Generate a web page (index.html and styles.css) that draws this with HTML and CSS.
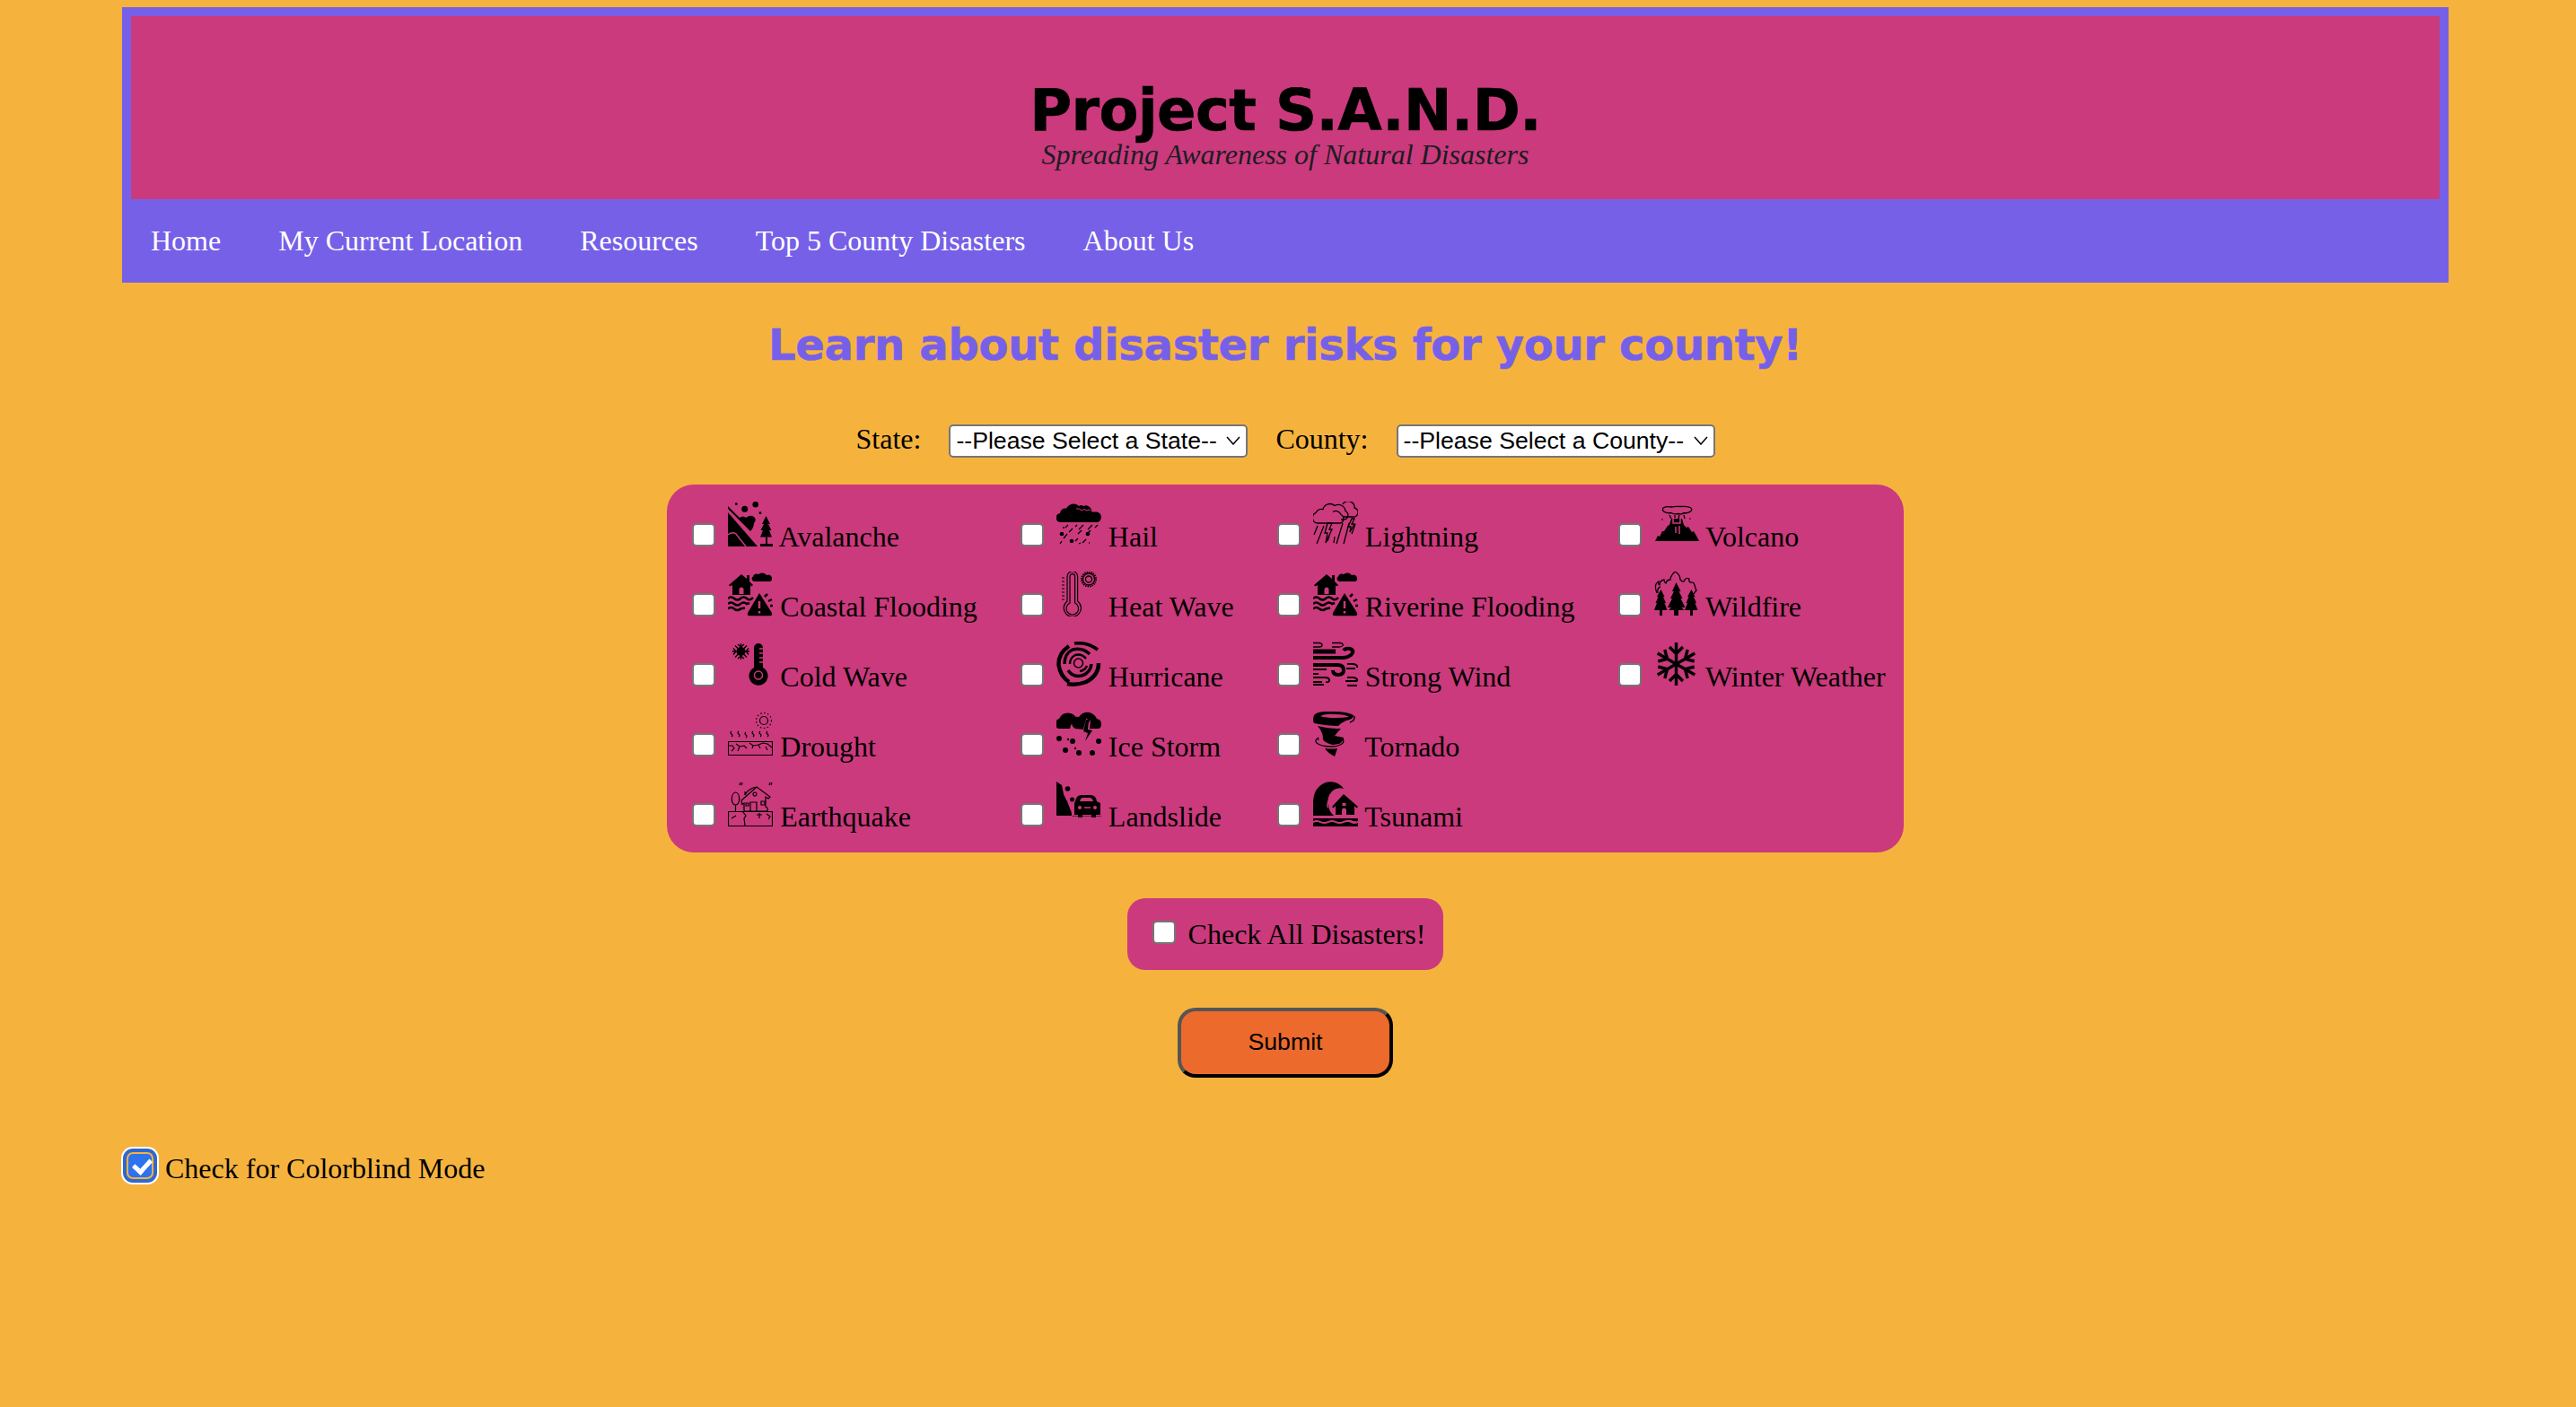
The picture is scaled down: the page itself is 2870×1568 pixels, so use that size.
FILE: index.html
```html
<!DOCTYPE html>
<html lang="en">
<head>
<meta charset="utf-8">
<title>Project S.A.N.D.</title>
<link rel="stylesheet" href="styles.css">
</head>
<body>
<svg class="defs" width="0" height="0" aria-hidden="true">
  <defs>
    <g id="i-flood">
      <path d="M1 15 15 3l6 5V4h3v7l4 4-1.500 1.500L25 15v11H5V15l-2.500 1.500z"/>
      <path class="cut-fill" d="M12.500 25v-5a2.500 2.500 0 0 1 5 0v5z"/>
      <path class="k" d="M0 30q3.500-3 7 0t7 0 7 0 7-1M0 36q3.500-3 7 0t7 0 7 0l3-1M0 41.500q3.500-3 7 0t7 0l5-1"/>
      <path d="M29 11a3 3 0 0 1-1-5.500 4 4 0 0 1 6-2.500 6 6 0 0 1 9 1 4 4 0 0 1 6 3.500 3 3 0 0 1-2 3.500z"/>
      <path d="M35 24 49 46q1 3-2 3.300H24q-3-.3-2-3.300z"/>
      <path class="cut" d="M35 33v8M35 44v2.500"/>
      <path class="k" d="m41 28 3-3M45 33l4-2M47 38h3"/>
    </g>
    <path id="i-arm" d="M24.500 25V1M17 6l7.500 7.500L32 6"/>
  </defs>
</svg>

<header class="site-header">
  <div class="banner">
    <div class="title">Project S.A.N.D.</div>
    <div class="subtitle">Spreading Awareness of Natural Disasters</div>
  </div>
  <nav class="nav">
    <a>Home</a>
    <a>My Current Location</a>
    <a>Resources</a>
    <a>Top 5 County Disasters</a>
    <a>About Us</a>
  </nav>
</header>

<main class="main">
  <h1 class="heading">Learn about disaster risks for your county!</h1>

  <form class="selects">
    <label for="state">State:</label>
    <span class="select-wrap">
      <select id="state" class="select"><option>--Please Select a State--</option></select>
      <svg class="chevron" viewBox="0 0 16 10"><path d="M1 1l7 8 7-8"/></svg>
    </span>
    <label for="county">County:</label>
    <span class="select-wrap">
      <select id="county" class="select"><option>--Please Select a County--</option></select>
      <svg class="chevron" viewBox="0 0 16 10"><path d="M1 1l7 8 7-8"/></svg>
    </span>
  </form>

  <div class="panel">
    <!-- row 1 -->
    <label class="item"><input type="checkbox" class="box"><svg class="icon" viewBox="0 0 50 50">
      <circle cx="30.700" cy="3.300" r="3.300"/><circle cx="18.700" cy="8.300" r="3.500"/><circle cx="9.300" cy="2.700" r="1.400"/><circle cx="36" cy="12.700" r="1.400"/>
      <path d="M0 5 13 18q4-3 7 0 5-4 9-1 3.500 3 0 7-.5 6-4 9L0 8z"/>
      <path d="M0 12 33 50H0z"/>
      <path class="cut" stroke-width="1.500" d="M0 37q5-4 9-1l11 14"/>
      <path d="M42.500 16 47 25h-2l3.500 7H46l3 7.500h-5V47h6v3H36v-3h6v-7.500h-6l3-7.500h-2.500L40 25h-2z"/>
    </svg> Avalanche</label>

    <label class="item"><input type="checkbox" class="box"><svg class="icon" viewBox="0 0 50 50">
      <path d="M5 23a5 5 0 0 1-1-10q1-6 7-5.500 3-5 9-5 3 0 5 2.500 3-2 5 0 4-2 7 1 3 3.500 2 5.500h6a6 6 0 0 1 1 11.500z"/>
      <path class="cut-thin" d="M22 8q4-1 6 2 3-3 6 0 2-2 4 0"/>
      <path class="k" stroke-width="1.300" d="m13 26-3 3M23 26l-2 2M30 26l-5 5M40 26l-5 5M46 26l-3 3M18 30l-4 4M28 32l-4 4M38 32l-5 5M12 36l-4 5M24 41l-3 3M33 42l-4 4M6 44l-2 3M27 46l-2 1M36 46h1"/>
      <circle cx="6" cy="36" r="2.300"/><circle cx="35" cy="36" r="2.300"/><circle cx="17" cy="44" r="2.300"/><circle cx="8" cy="29" r="1"/>
    </svg> Hail</label>

    <label class="item"><input type="checkbox" class="box"><svg class="icon" viewBox="0 0 50 50">
      <g class="thin">
        <path d="M31 20h3a5 5 0 0 0 2-9.500 8 8 0 0 0-12-6 8 8 0 0 0-13 4 7 7 0 0 0-8 4A6 6 0 0 0 5 24h24a5 5 0 0 0 2-9.500 6 6 0 0 0-9-3"/>
        <path d="M34 17h10a5 5 0 0 0 2-10 7 7 0 0 0-13-4"/>
        <path d="M5 27 1 37M12 27 4 47M18 38l-2 6M24 39l-1 7M33 24l-7 23M40 24l-6 23M47 25l-4 11"/>
        <path d="M21 24h-5l-3 11h3l-2 11 7-15h-3z"/>
        <path d="M43 19h3l-3 6h3l-5 9 1-6h-3z"/>
      </g>
    </svg> Lightning</label>

    <label class="item"><input type="checkbox" class="box"><svg class="icon" viewBox="0 0 50 50">
      <g class="thin">
        <path d="M10 7q4-2 9-1 5-1 10-.5 7-.5 11 1 3 2 1 4-3 3-8 2-2 2-6 1-5 1-8-1-6 1-9-2-1-3 0-3.500z"/>
        <path d="M17 15l2 4M23 15v3M28 15l-1 4M33 15l1 4"/>
      </g>
      <path d="M19 19h12l2 7 3 3 2-1 4 6 2-1 4 7 2 4H1l3-6 2 1 3-6h2l4-6 2-1z"/>
      <path class="cut" stroke-width="1.500" d="M21 19v5h8v-5M24 28v7M28 27v9"/>
      <circle cx="9" cy="20" r=".8"/><circle cx="40" cy="19" r=".8"/>
    </svg> Volcano</label>

    <!-- row 2 -->
    <label class="item"><input type="checkbox" class="box"><svg class="icon" viewBox="0 0 50 50"><use href="#i-flood"/></svg> Coastal Flooding</label>

    <label class="item"><input type="checkbox" class="box"><svg class="icon" viewBox="0 0 50 50">
      <g class="thin">
        <path stroke-width="1.200" d="M12 33V5.500a5.800 5.800 0 0 1 11.600 0V33a9.600 9.600 0 1 1-11.600 0z"/>
        <path stroke-width="1.200" d="M15 35V5.500a2.800 2.800 0 0 1 5.600 0V35a6.800 6.800 0 1 1-5.600 0z"/>
        <path stroke-width="1.200" d="M6 7h3M6 11h3M6 15h3M6 19h3M6 23h3M6 27h3M6 31h3"/>
        <circle cx="36" cy="8.500" r="6.500"/>
        <circle cx="36" cy="8.500" r="3.500"/>
        <path stroke-dasharray="1.500 1" stroke-width="2" d="M44 8.500a8 8 0 1 1-16 0 8 8 0 1 1 16 0z"/>
      </g>
    </svg> Heat Wave</label>

    <label class="item"><input type="checkbox" class="box"><svg class="icon" viewBox="0 0 50 50"><use href="#i-flood"/></svg> Riverine Flooding</label>

    <label class="item"><input type="checkbox" class="box"><svg class="icon" viewBox="0 0 50 50">
      <g class="thin">
        <path d="M3 24Q-1 14 5 11q-1 3 1 4 0-5 5-6 0 3 2 4 1-4 5-4 0-4 5-9 6 3 6 9 3 3 4 2 2-5 6-3-1 2 1 4 4-1 5 3t2 6q-2 2-3 4"/>
        <path d="M4 24q-1-6 3-7"/>
      </g>
      <path d="M24.500 12l5 10h-2l4 8h-2l5 10h-4l3 3H16l3-3h-4l5-10h-2l4-8h-2zM22 43h5v6h-5z"/>
      <path d="M7.500 20l4 8H10l3 7h-1.500l3 8H0l3-8H1.500l3-7H3zM6 43h3v6H6z"/>
      <path d="M41.500 20l4 8H44l3 7h-1.500l3 8H34l3-8h-1.500l3-7H37zM40 43h3v6h-3z"/>
    </svg> Wildfire</label>

    <!-- row 3 -->
    <label class="item"><input type="checkbox" class="box"><svg class="icon" viewBox="0 0 50 50">
      <circle cx="14.500" cy="11" r="5"/>
      <path class="k" stroke-width="1.300" d="M14.500 2v18M5 11h19M8 4.500l13 13M21 4.500l-13 13M11 3l3.500 3L18 3M11 19l3.500-3 3.500 3M6 7.500 9 11l-3 3.500M23 7.500 20 11l3 3.500"/>
      <path d="M29 7a5 5 0 0 1 10 0v22a10.500 10.500 0 1 1-10 0z"/>
      <circle class="cut" stroke-width="1.500" cx="34" cy="37.500" r="4.500"/>
      <path class="cut" stroke-width="1.500" d="M35 8h4M35 13h4M35 18h4M35 23h4"/>
    </svg> Cold Wave</label>

    <label class="item"><input type="checkbox" class="box"><svg class="icon" viewBox="0 0 50 50">
      <circle class="k" stroke-width="1.500" cx="24.500" cy="24" r="5"/>
      <path class="k" stroke-width="4.500" d="M14 5Q2 13 2.500 26 4 38 14 45"/>
      <path class="k" stroke-width="3.500" d="M20 2Q34 0 46 9"/>
      <path class="k" stroke-width="4.500" d="M47 24Q47 38 33 45 22 49 12 47"/>
      <path class="k" stroke-width="3.500" d="M37 14Q29 6 18 9 9 13 9 25"/>
      <path class="k" stroke-width="3.500" d="M39 25Q38 35 28 38 18 40 13 32"/>
      <path class="k" stroke-width="2.500" d="M33 19Q28 13 21 15 15 18 15 25M34 27Q32 32 26 33"/>
    </svg> Hurricane</label>

    <label class="item"><input type="checkbox" class="box"><svg class="icon" viewBox="0 0 50 50">
      <path class="k" stroke-width="1.300" d="M0 1.500h7q3 .5 3 2.500t-3 2H0M21 1.500h9q4 .5 3 3-1 1.500-4 1.500H21"/>
      <path d="M0 8.500h25v5H0z"/>
      <path class="k" stroke-width="4" d="M0 18h33q5 0 9-3 5-5-1-7-5-1-7 2"/>
      <path class="k" stroke-width="4" d="M0 26h27q7 0 7 5.500 0 5.500-6 5.500t-6-5"/>
      <path class="k" stroke-width="1.800" d="M0 31h15M0 40h13q5 0 5 3t-4 2M0 45h10M0 36h6M0 48h12M38 25h7q5 1 4 4M37 30h10M38 40h7q5 1 4 4M36 44h13M38 49h11"/>
    </svg> Strong Wind</label>

    <label class="item"><input type="checkbox" class="box"><svg class="icon" viewBox="0 0 50 50">
      <g class="k" stroke-width="3.400">
        <use href="#i-arm"/>
        <use href="#i-arm" transform="rotate(60 24.500 25)"/>
        <use href="#i-arm" transform="rotate(120 24.500 25)"/>
        <use href="#i-arm" transform="rotate(180 24.500 25)"/>
        <use href="#i-arm" transform="rotate(240 24.500 25)"/>
        <use href="#i-arm" transform="rotate(300 24.500 25)"/>
      </g>
    </svg> Winter Weather</label>

    <!-- row 4 -->
    <label class="item"><input type="checkbox" class="box"><svg class="icon" viewBox="0 0 50 50">
      <g class="thin">
        <circle stroke-width="1.200" cx="40" cy="10" r="4.500"/>
        <circle stroke-width="1.200" stroke-dasharray="1.500 2.500" cx="40" cy="10" r="8.500"/>
        <path stroke-width="1.200" d="M4 22q-2 1.500 0 3t0 3M12 22q-2 1.500 0 3t0 3M20 23q-2 1.500 0 3t0 3M28 22q-2 1.500 0 3t0 3M36 22q-2 1.500 0 3t0 3M44 22q-2 1.500 0 3t0 3"/>
        <path stroke-width="1.100" d="M.5 33.500h49v15H.5z"/>
        <path stroke-width="1.100" d="M1 38h4l2 3-3 3M9 36l4 3 5-1 3 3M24 35l4 3 6-1 2 4M34 37l5-2 5 1 5 4M42 39l2 4M13 39l-2 5M28 38l-1 3"/>
      </g>
    </svg> Drought</label>

    <label class="item"><input type="checkbox" class="box"><svg class="icon" viewBox="0 0 50 50">
      <path d="M2 19a6 6 0 0 1 1-11q4-8 13-6 4 1 7 6l-3 3q-4 2-5 8z"/>
      <path d="M21 19a7 7 0 0 1-1-12q3-2 5-1 4-6 12-5 6 2 8 7 5 1 5 6t-4 5H37l1-10-7 11z"/>
      <path class="cut" stroke-width="1.500" d="M34 8 30 22l5 2"/>
      <path d="M33 9l-3 13 5 2-3 9 8-12-5-1 1-11z"/>
      <circle cx="3" cy="30" r="3"/><circle cx="18" cy="33" r="3"/><circle cx="47" cy="33" r="3"/><circle cx="10" cy="43" r="3"/><circle cx="25" cy="46" r="3"/><circle cx="40" cy="46" r="3"/><circle cx="13" cy="31" r="1.200"/><circle cx="21" cy="41" r="1.200"/>
    </svg> Ice Storm</label>

    <label class="item"><input type="checkbox" class="box"><svg class="icon" viewBox="0 0 50 50">
      <path d="M1 4Q5-1 23 0q15 0 22 4 1 4-8 6-5 2-9 6-12 0-27-3Q-1 9 1 4z"/>
      <path class="cut-fill" d="M8 5q6-3 17-2 11 0 15 3-7 1-15 1Q14 7 8 5z"/>
      <path class="k" stroke-width="1.500" d="M46 5q1 5-5 7"/>
      <path d="M5 16q12 3 22 3h4q-4 4-7 8l10 2q-1 5-5 7l-7 1Q9 34 11 28q-1-6-6-12z"/>
      <path class="k" stroke-width="1.300" d="M6 29q-5 3-2 6 5 4 16 4 8 0 12-3 3-2 1-6M6 29q-1 1 0 3"/>
      <path d="M13 41q7 1 14 0l-3 9q-8-4-11-9z"/>
    </svg> Tornado</label>

    <span></span>

    <!-- row 5 -->
    <label class="item"><input type="checkbox" class="box"><svg class="icon" viewBox="0 0 50 50">
      <g class="thin">
        <path stroke-width="1.200" d="M.5 49.500h49v-16H.5zM8.500 33V26M8.500 26c-6 0-5-14 0-14s6 14 0 14z"/>
        <path stroke-width="1.200" d="M15 21 32 6l15 11-2 2-3-2v11q3 1 2 5H18V24l-2 1.500zM19 15V11M32 6q-10 2-13 9"/>
        <path stroke-width="1.200" d="M25 33V23h7v10M32 14a2 2 0 1 0 0 .1M37 22h4v4h-4zM20 24h3v3h-3z"/>
        <path stroke-width="1.200" d="M16 33l4 5-2 3 1 8M38 37h-6M35 35v6M4 41l5-3M43 36l4 3-2 3M14 1l-1 3M16 1l-1 3M47 1l-1 3M49 1l-1 3M16 29h.5M14 25h.5"/>
      </g>
    </svg> Earthquake</label>

    <label class="item"><input type="checkbox" class="box"><svg class="icon" viewBox="0 0 50 50">
      <path d="M0 0l6 4 2 10q2 5 4 8l3 8q2 3 2 8v.500h33V38H0z"/>
      <path class="cut-fill" d="M10 5q5 0 7 4 1 5-3 6-4 0-5-4zM15 17q4-1 6 2 1 4-3 5-4 0-4-3z"/>
      <circle cx="12.500" cy="8" r="2.800"/><circle cx="17.500" cy="20" r="2.500"/>
      <path d="M21 22q1-7 7-7h10q6 0 7 7l4 2v13h-5v3h-5v-3H29v3h-5v-3h-4V24z"/>
      <path class="cut-fill" d="M26 22q1-4 3-4h8q3 0 4 4z"/>
      <circle class="cut-fill" cx="26" cy="29" r="2"/><circle class="cut-fill" cx="43" cy="29" r="2"/>
      <path class="cut" stroke-width="1.500" d="M31 29h7"/>
    </svg> Landslide</label>

    <label class="item"><input type="checkbox" class="box"><svg class="icon" viewBox="0 0 50 50">
      <path d="M0 38V22Q1 6 14 1q13-3 20 7-7-2-12 2-7 6-5 15 0 8 6 13z"/>
      <path class="cut" stroke-width="1.500" d="M21 16q-6 6-5 13"/>
      <path d="M34 14 50 28l-1.500 1.500L46 27v10H25V27l-2.500 2.500L21 28z"/>
      <path class="cut-fill" d="M32 37v-5a2.500 2.500 0 0 1 5 0v5zM32.500 24h4v3h-4z"/>
      <path d="M0 41h50v3q-4 1-8-1-4-1-8 1-5 2-9 0-4-2-8 0-5 2-9 0-4-2-8 0z"/>
      <path d="M0 46q4-2 8 0t9 0q4-2 8 0 4 2 9 0t8 0q4 2 8 0v4H0z"/>
    </svg> Tsunami</label>
  </div>

  <label class="check-all"><input type="checkbox" class="box">Check All Disasters!</label>

  <button type="button" class="submit">Submit</button>

  <label class="colorblind"><input type="checkbox" class="box box-focused" checked>Check for Colorblind Mode</label>
</main>
</body>
</html>
```

FILE: styles.css
```css
html, body {
  margin: 0;
  height: 100%;
}
body {
  background: #f5b33e;
  padding: 8px 142px 0 136px;
  box-sizing: border-box;
  font-family: "Liberation Serif", "Times New Roman", serif;
  font-size: 32px;
  color: #000;
  overflow: hidden;
}
.defs { position: absolute; }

.site-header { background: #7660e8; padding-top: 10px; }
.banner {
  margin: 0 10px;
  background: #cb3a7c;
  padding: 75px 0 31px;
  text-align: center;
}
.title {
  font-family: "DejaVu Sans", Verdana, sans-serif;
  font-weight: 700;
  font-size: 64px;
  letter-spacing: -0.6px;
  line-height: 61px;
  -webkit-text-stroke: 0.6px #000;
}
.subtitle {
  font-style: italic;
  color: #1c1c24;
}
.nav {
  display: flex;
  gap: 64px;
  padding: 28px 32px;
  color: #fff;
}

.main {
  display: flex;
  flex-direction: column;
  align-items: center;
}
.heading {
  margin: 41px 0 0;
  font-family: "DejaVu Sans", Verdana, sans-serif;
  font-weight: 700;
  font-size: 48px;
  letter-spacing: -0.3px;
  -webkit-text-stroke: 0.6px #7660e8;
  color: #7660e8;
}
.selects {
  display: flex;
  align-items: baseline;
  gap: 31px;
  margin-top: 59px;
}
.select-wrap {
  position: relative;
  display: inline-flex;
}
.select {
  appearance: none;
  height: 37px;
  box-sizing: border-box;
  padding: 0 32px 0 6px;
  background: #fff;
  border: 2px solid #767676;
  border-radius: 5px;
  font-family: "Liberation Sans", Arial, sans-serif;
  font-size: 26.67px;
  color: #000;
}
.chevron {
  position: absolute;
  right: 8px;
  top: 13px;
  width: 16px;
  height: 10px;
  fill: none;
  stroke: #000;
  stroke-width: 1.500;
}

.panel {
  display: grid;
  grid-template-columns: repeat(4, auto);
  column-gap: 48px;
  row-gap: 20px;
  margin-top: 30px;
  padding: 19px 20px 21px 28px;
  background: #cb3a7c;
  border-radius: 30px;
}
.item { display: block; white-space: nowrap; }
.box {
  appearance: none;
  width: 26px;
  height: 26px;
  margin: 0 14px 0 0;
  background: #fff;
  border: 2px solid #767676;
  border-radius: 5px;
  box-sizing: border-box;
  vertical-align: baseline;
  position: relative;
}
.icon {
  width: 50px;
  height: 50px;
  vertical-align: baseline;
  fill: #000;
  stroke-width: 2.500;
  overflow: hidden;
}
.k, .thin {
  fill: none;
  stroke: #000;
}
.thin { stroke-width: 1.300; }
.thin * { fill: none; }
.cut {
  fill: none;
  stroke: #cb3a7c;
}
.cut-thin {
  fill: none;
  stroke: #cb3a7c;
  stroke-width: 1;
}
.cut-fill { fill: #cb3a7c; }

.check-all {
  margin-top: 51px;
  padding: 22px 20px 21px 28px;
  background: #cb3a7c;
  border-radius: 20px;
  white-space: nowrap;
}
.submit {
  margin-top: 42px;
  width: 240px;
  height: 78px;
  background: #ec6a2c;
  border-width: 4px;
  border-style: solid;
  border-color: #555 #000 #000 #555;
  border-radius: 20px;
  font-family: "Liberation Sans", Arial, sans-serif;
  font-size: 26.67px;
  color: #000;
}
.colorblind {
  align-self: flex-start;
  margin-top: 83px;
  padding-left: 7px;
  white-space: nowrap;
}
.box-focused {
  margin: 0 15px 1px 0;
  background: #2f72ee;
  border: 0;
  box-shadow: 0 0 0 2px #f5b33e, 0 0 0 6px #2f69cf, 0 0 0 8px #fff;
}
.box-focused::after {
  content: "";
  position: absolute;
  left: 9px;
  top: 2px;
  width: 8px;
  height: 15px;
  border: solid #fff;
  border-width: 0 5px 5px 0;
  transform: rotate(42deg);
}
```
